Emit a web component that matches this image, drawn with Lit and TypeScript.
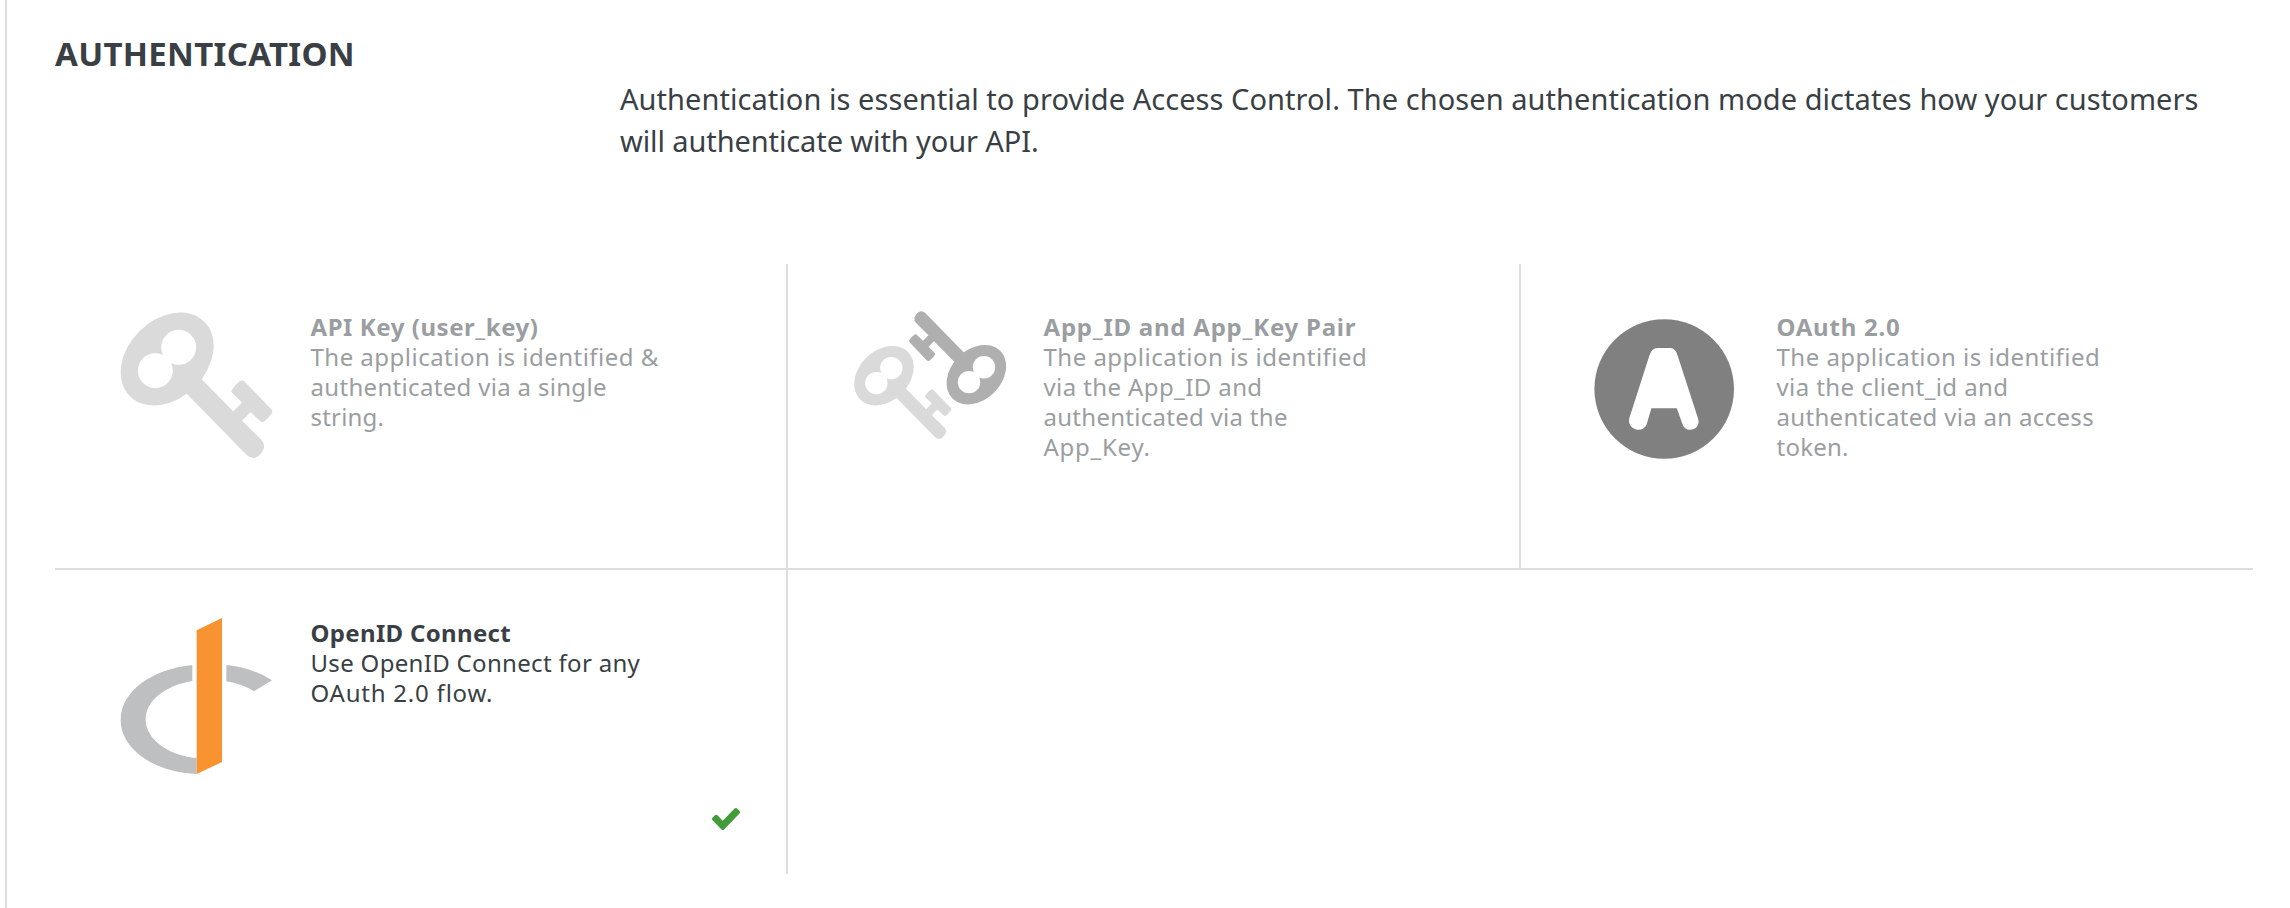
import { LitElement, html, css, svg, nothing, TemplateResult } from "lit";
import { customElement } from "lit/decorators.js";
import { classMap } from "lit/directives/class-map.js";

// A line of copy and its tracking in pixels.
type Line = [string, number];

interface Mode {
  icon: TemplateResult;
  title: Line;
  lines: Line[];
  selected?: boolean;
}

const keyShape = svg`
  <ellipse cx="201.5" cy="207" rx="158" ry="118" transform="rotate(-45 201.5 207)"></ellipse>
  <path d="M290 253 L305 268 L400 364 L426 338 L397 309 Q392 304 396 299 Q407 283 420 273 Q427 269 433 274 L514 358 Q519 363 516 369 Q505 385 493 394 Q486 399 480 393 L452 366 L426 392 L484 449 Q494 459 492 474 Q482 500 461 504 Q449 504 440 495 L261 312 L240 290 Z"></path>
  <circle cx="236" cy="172" r="52.5" fill="#fff"></circle>
  <circle cx="166" cy="242" r="52.5" fill="#fff"></circle>`;

const keyIcon = html`<svg class="icon" viewBox="60 60 462 462"><g fill="#dadada">${keyShape}</g></svg>`;

const keyPairIcon = html`<svg class="icon" viewBox="39 60 462 462">
  <g fill="#dadada" transform="translate(2.9 124.5) scale(.64)">${keyShape}</g>
  <g fill="#afafaf" transform="translate(538.1 386.5) scale(-.64)">${keyShape}</g>
</svg>`;

const oauthIcon = html`<svg class="icon" viewBox="0 0 154 154">
  <circle cx="78.2" cy="79" r="69.8" fill="#808080"></circle>
  <path fill="#fff" d="M63.4 45.5 Q65.6 38 71.5 38 H84.5 Q89.5 38 91.6 45.5 L112.2 109 C114 115 109.5 119.8 104 119.8 C100.5 119.8 97.8 118 96.6 114.5 L90.8 98.3 H65.4 L60.6 114.5 C59.3 118 56 119.8 52.4 119.8 C46.5 119.8 42 115 43.2 108.6 Z"></path>
</svg>`;

const openidIcon = html`<svg class="icon" viewBox="60 48 462 462">
  <g fill="#bdbfc1">
    <path d="M277 195 C155 207 62 275 62 359 C62 445 160 517 290 522 V474 C205 466 137 417 137 359 C137 303 195 256 277 243 Z"></path>
    <path d="M379 195 C430 200 477 216 516 241 L462 274 C438 259 410 249 379 244 Z"></path>
  </g>
  <path fill="#f79331" d="M290 91 L366 54 V486 L290 522 Z"></path>
</svg>`;

const checkIcon = html`<svg class="check" viewBox="121 334 1550 1188" preserveAspectRatio="none">
  <path fill="#439c3a" d="M1671 566q0 40-28 68l-724 724-136 136q-28 28-68 28t-68-28l-136-136-362-362q-28-28-28-68t28-68l136-136q28-28 68-28t68 28l294 295 656-657q28-28 68-28t68 28l136 136q28 28 28 68z"></path>
</svg>`;

const modes: Mode[] = [
  {
    icon: keyIcon,
    title: ["API Key (user_key)", 0.55],
    lines: [
      ["The application is identified &", 0.48],
      ["authenticated via a single", 0.32],
      ["string.", 0.2],
    ],
  },
  {
    icon: keyPairIcon,
    title: ["App_ID and App_Key Pair", 0.77],
    lines: [
      ["The application is identified", 0.49],
      ["via the App_ID and", 0.4],
      ["authenticated via the", 0.28],
      ["App_Key.", 0.75],
    ],
  },
  {
    icon: oauthIcon,
    title: ["OAuth 2.0", 0.75],
    lines: [
      ["The application is identified", 0.49],
      ["via the client_id and", 0.42],
      ["authenticated via an access", 0.32],
      ["token.", 0.25],
    ],
  },
  {
    icon: openidIcon,
    title: ["OpenID Connect", 0.33],
    lines: [
      ["Use OpenID Connect for any", 0.32],
      ["OAuth 2.0 flow.", 0.78],
    ],
    selected: true,
  },
];

@customElement("app-root")
export class AppRoot extends LitElement {
  static styles = css`
    :host {
      display: block;
      box-sizing: border-box;
      height: 908px;
      margin-left: 5px;
      border-left: 2px solid #dedede;
      padding: 36px 37px 0 48px;
      overflow: hidden;
      background: #fff;
      color: #393f44;
      font-family: "Noto Sans", sans-serif;
    }
    .heading {
      margin: 0;
      font-size: 33px;
      line-height: 36px;
      font-weight: 700;
      letter-spacing: 0.3px;
    }
    .intro {
      margin: 6px 0 0 565px;
      height: 186px;
      font-size: 29px;
      line-height: 42px;
      white-space: nowrap;
    }
    .line {
      display: block;
      white-space: nowrap;
    }
    .modes {
      display: grid;
      grid-template-columns: repeat(3, 733px);
      grid-template-rows: 306px 304px;
      width: 2198px;
    }
    .mode {
      display: flex;
      flex-direction: column;
      box-sizing: border-box;
      padding: 46px 46px 44px 65px;
      border-right: 2px solid #dedede;
      color: #9a9ea1;
    }
    .mode.top {
      border-bottom: 2px solid #dedede;
    }
    .mode.last {
      width: 732px;
      border-right: 0;
    }
    .mode.selected {
      color: #393f44;
    }
    .body {
      display: flex;
      gap: 37px;
    }
    .icon {
      flex: none;
      width: 154px;
      height: 154px;
      overflow: visible;
    }
    .text {
      margin: 2px 0 0 -0.5px;
      font-size: 24px;
      line-height: 30px;
    }
    .title {
      font-weight: 700;
    }
    .check {
      width: 28px;
      height: 22px;
      margin-top: auto;
      align-self: flex-end;
    }
  `;

  private line([text, tracking]: Line, title = false) {
    return html`<span class=${classMap({ line: true, title })} style="letter-spacing:${tracking}px">${text}</span>`;
  }

  render() {
    return html`
      <h2 class="heading">AUTHENTICATION</h2>
      <div class="intro">
        ${this.line(["Authentication is essential to provide Access Control. The chosen authentication mode dictates how your customers", 0.055])}
        ${this.line(["will authenticate with your API.", -0.1])}
      </div>
      <div class="modes">
        ${modes.map(
          (m, i) => html`<div class=${classMap({ mode: true, top: i < 3, last: i === 2, selected: !!m.selected })}>
            <div class="body">
              ${m.icon}
              <div class="text">
                ${this.line(m.title, true)} ${m.lines.map((l) => this.line(l))}
              </div>
            </div>
            ${m.selected ? checkIcon : nothing}
          </div>`
        )}
      </div>
    `;
  }
}
